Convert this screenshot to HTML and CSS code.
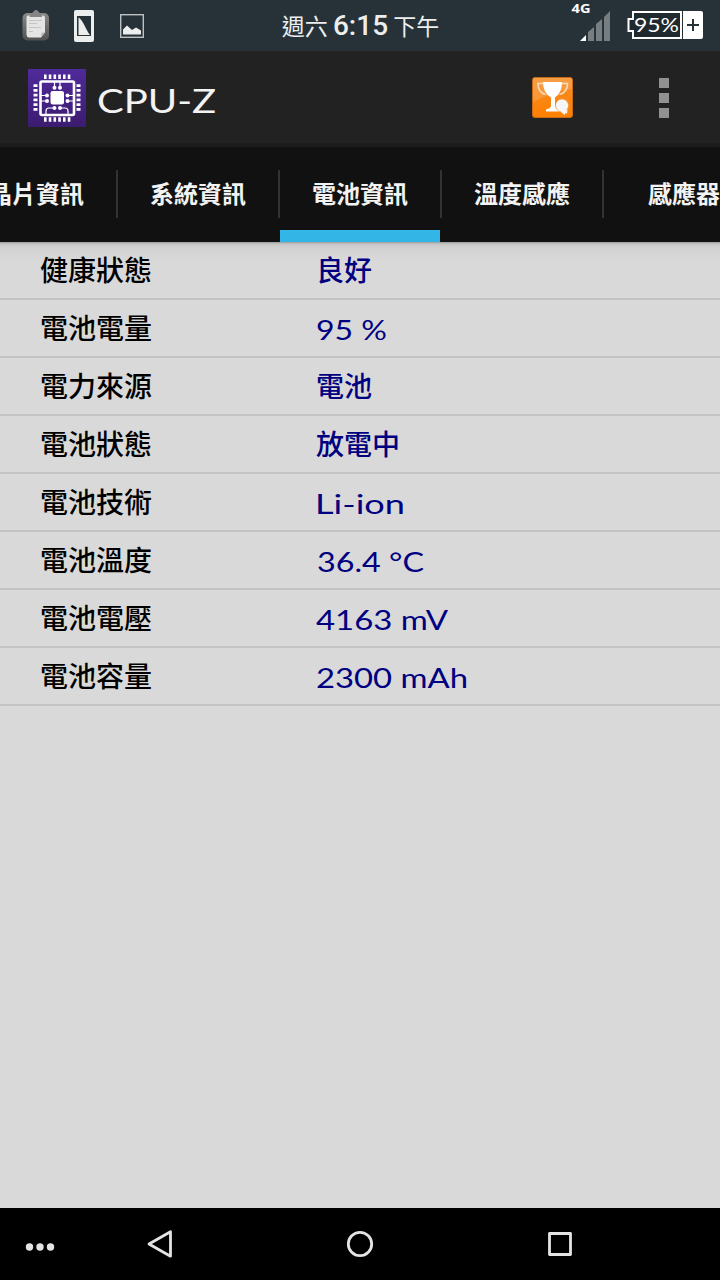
FILE: index.html
```html
<!DOCTYPE html>
<html lang="zh-Hant">
<head>
    <meta charset="utf-8">
    <title>CPU-Z</title>
    <link rel="stylesheet" href="styles.css">
</head>
<body>
    <!-- Status bar -->
    <div class="status-bar">
        <div class="status-icons">
            <svg width="28" height="34" viewBox="0 0 28 34">
                <defs>
                    <linearGradient id="clip" x1="0" y1="0" x2="0" y2="1">
                        <stop offset="0" stop-color="#8a8a8a"/>
                        <stop offset="1" stop-color="#515151"/>
                    </linearGradient>
                </defs>
                <rect x="0.5" y="4" width="26.5" height="27.5" rx="5" fill="url(#clip)"/>
                <path d="M6 6.500h15q2 0 2 2v15l-4 5H7q-2.500-.3-2.500-3v-17q0-2 1.500-2z" fill="#e4e4e4"/>
                <path d="M7 11.500h13M7 14.500h8M7 18.500h12M7 22.500h4" stroke="#c4c4c4" fill="none"/>
                <path d="M19 28l.5-4 3.500-1z" fill="#b5b5b5"/>
                <path d="M7.500 8c0-3 2-4 3.500-4.500 1-3.500 5-3.500 6 0 1.500.5 3 1.500 3 4.500z" fill="#858585"/>
            </svg>
            <svg width="20" height="32" viewBox="0 0 20 32">
                <path fill-rule="evenodd" d="M2 0h16q2 0 2 2v28q0 2-2 2H2q-2 0-2-2V2q0-2 2-2zM3 6v20h14V6z" fill="#eceeee"/>
                <path d="M4.500 7.500v17.500h11.500C12 20 9 10 4.500 7.500z" fill="#eceeee"/>
            </svg>
            <svg class="gallery" width="24" height="24" viewBox="0 0 24 24">
                <rect x="0.700" y="0.700" width="22.600" height="22.600" fill="none" stroke="#bcc1c3" stroke-width="1.400"/>
                <path d="M3 20.500v-5l4-4 5 4.500 4-2.500 5 3v4z" fill="#eceeee"/>
            </svg>
        </div>
        <div class="clock">週六 <b>6:15</b> 下午</div>
        <div class="status-right">
            <svg width="40" height="42" viewBox="0 0 40 42">
                <text class="network" x="1.500" y="13" textLength="19" lengthAdjust="spacingAndGlyphs">4G</text>
                <path d="M10 41l6-6v6z" fill="#fff"/>
                <path d="M18 41v-9l6-5v14zM26 41V24l6-5v22zM34 41V17l6-6v30z" fill="#767e81"/>
            </svg>
            <svg width="76" height="28" viewBox="0 0 76 28">
                <path d="M6 1h48v26H6v-7H1.500V8H6z" fill="#202a2e" stroke="#fff" stroke-width="2"/>
                <text class="battery" x="7" y="20.500" textLength="45" lengthAdjust="spacingAndGlyphs">95%</text>
                <path d="M56 0h18q2 0 2 2v24q0 2-2 2H56z" fill="#fff"/>
                <path d="M66 8v12M60 14h12" stroke="#263238" stroke-width="2"/>
            </svg>
        </div>
    </div>

    <!-- App bar -->
    <div class="app-bar">
        <svg class="app-icon" width="58" height="58" viewBox="0 0 58 58">
            <defs>
                <linearGradient id="chip" x1="0" y1="0" x2="0" y2="1">
                    <stop offset="0" stop-color="#4f2a9a"/>
                    <stop offset="1" stop-color="#3c1c70"/>
                </linearGradient>
            </defs>
            <rect width="58" height="58" fill="url(#chip)"/>
            <rect x="12.500" y="12.500" width="33.500" height="33.500" rx="1.500" fill="none" stroke="#fff" stroke-width="2.600"/>
            <g stroke="#fff" stroke-dasharray="2.600 2.150">
                <path d="M16 7.700h27M16 50.500h27" stroke-width="4.400"/>
                <path d="M7.500 15.300v27M50.500 15.300v27" stroke-width="4"/>
            </g>
            <rect x="22.500" y="22" width="13.500" height="13.500" rx="2.200" fill="#fff"/>
            <path d="M26.500 13v6M32 13v6M13 26.500h6M13 32h6M45 26.500h-6M45 32h-6M27 39h-6q-3 0-3 3v4M32 39h5q3 0 3 3v4" fill="none" stroke="#fff" stroke-width="1.200"/>
            <g fill="#fff">
                <circle cx="26.500" cy="18.800" r="2"/>
                <circle cx="32" cy="18.800" r="2"/>
                <circle cx="19" cy="26.500" r="2"/>
                <circle cx="19" cy="32" r="2"/>
                <circle cx="39.500" cy="26.500" r="2"/>
                <circle cx="39.500" cy="32" r="2"/>
                <circle cx="26.500" cy="39" r="2"/>
                <circle cx="32" cy="39" r="2"/>
            </g>
        </svg>
        <svg class="app-title" width="124" height="48" viewBox="0 0 124 48">
            <text x="1" y="39" textLength="119" lengthAdjust="spacingAndGlyphs">CPU-Z</text>
        </svg>
        <svg class="trophy" width="41" height="41" viewBox="0 0 41 41">
            <defs>
                <linearGradient id="orange" x1="0" y1="0" x2="0" y2="1">
                    <stop offset="0" stop-color="#f48d26"/>
                    <stop offset="1" stop-color="#ff8000"/>
                </linearGradient>
            </defs>
            <rect x="0.500" y="0.500" width="40" height="40" rx="2.500" fill="url(#orange)" stroke="#c66b19"/>
            <path d="M1 1h39v11Q22 14 1 25z" fill="#fff" opacity="0.150"/>
            <path d="M12 6.500H6q0 9 7.500 11M29 6.500h6.500q0 9-8 11" fill="none" stroke="#fbdcc0" stroke-width="1.500"/>
            <path d="M11 5h19q0 11-7 15.500v9q1 2 4 3v2H14v-2q4-1 5-3v-9Q11 16 11 5z" fill="#fff"/>
            <circle cx="30" cy="28.500" r="6.500" fill="#f6f6f6" stroke="#f49a45" stroke-width="0.700"/>
            <path d="M28.500 34.500l7-2-.5 4-1.500-.5-1 2z" fill="#f6f6f6"/>
        </svg>
        <div class="overflow"><i></i><i></i><i></i></div>
    </div>

    <!-- Tabs -->
    <div class="tabs">
        <div class="tab">晶片資訊</div>
        <div class="tab">系統資訊</div>
        <div class="tab active">電池資訊</div>
        <div class="tab">溫度感應</div>
        <div class="tab">感應器</div>
    </div>

    <!-- Battery details -->
    <div class="content">
        <div class="row"><span class="label">健康狀態</span><span class="value">良好</span></div>
        <div class="row"><span class="label">電池電量</span><svg class="reading" width="200" height="56"><text x="0" y="40" textLength="71" lengthAdjust="spacingAndGlyphs">95 %</text></svg></div>
        <div class="row"><span class="label">電力來源</span><span class="value">電池</span></div>
        <div class="row"><span class="label">電池狀態</span><span class="value">放電中</span></div>
        <div class="row"><span class="label">電池技術</span><svg class="reading" width="200" height="56"><text x="-1" y="40" textLength="90" lengthAdjust="spacingAndGlyphs">Li-ion</text></svg></div>
        <div class="row"><span class="label">電池溫度</span><svg class="reading" width="200" height="56"><text x="1" y="40" textLength="107" lengthAdjust="spacingAndGlyphs">36.4 °C</text></svg></div>
        <div class="row"><span class="label">電池電壓</span><svg class="reading" width="200" height="56"><text x="0" y="40" textLength="132" lengthAdjust="spacingAndGlyphs">4163 mV</text></svg></div>
        <div class="row"><span class="label">電池容量</span><svg class="reading" width="200" height="56"><text x="0" y="40" textLength="152" lengthAdjust="spacingAndGlyphs">2300 mAh</text></svg></div>
    </div>

    <!-- Navigation bar -->
    <div class="nav-bar">
        <svg width="720" height="72" viewBox="0 0 720 72">
            <g fill="#e4e4e4">
                <circle cx="29.500" cy="39" r="3.700"/>
                <circle cx="40" cy="39" r="3.700"/>
                <circle cx="50.500" cy="39" r="3.700"/>
            </g>
            <g fill="none" stroke="#e4e4e4" stroke-width="2.800" stroke-linejoin="round">
                <path d="M170.500 23.800v24.400L149 36z"/>
                <circle cx="360" cy="36" r="11.700"/>
                <rect x="549.500" y="25.500" width="21" height="21"/>
            </g>
        </svg>
    </div>
</body>
</html>
```
FILE: styles.css
```css
body {
    margin: 0;
    width: 720px;
    height: 1280px;
    display: flex;
    flex-direction: column;
    overflow: hidden;
    background-color: #d9d9d9;
    font-family: "Noto Sans CJK TC", sans-serif;
}
svg {
    display: block;
    flex: none;
    overflow: visible;
}
.status-bar {
    height: 51px;
    flex: none;
    display: grid;
    grid-template-columns: 260px 201px 259px;
    background-color: #273238;
    color: #eceeee;
}
.status-icons {
    display: flex;
    align-items: center;
    gap: 24px;
    padding-left: 22px;
}
.gallery {
    margin-left: 2px;
}
.clock {
    font-size: 23px;
    line-height: 50px;
    text-align: center;
    white-space: nowrap;
}
.clock b {
    font: 500 28px/50px Roboto, sans-serif;
}
.status-right {
    display: flex;
    justify-content: flex-end;
    padding-right: 17px;
    gap: 17px;
}
.status-right svg:last-child {
    margin-top: 11px;
}
.network {
    font: bold 13px "Open Sans", sans-serif;
    fill: #fff;
}
.battery {
    font: 19px Lato, sans-serif;
    fill: #fff;
}
.app-bar {
    height: 96px;
    flex: none;
    box-sizing: border-box;
    display: flex;
    align-items: center;
    padding-top: 1px;
    background-color: #222;
    border-bottom: 4px solid #1c1c1c;
}
.app-icon {
    margin-left: 28px;
}
.app-title {
    margin-left: 10px;
}
.app-title text {
    font: 33px Lato, sans-serif;
    fill: #f3f3f3;
}
.trophy {
    margin-left: 312px;
}
.overflow {
    display: grid;
    gap: 5px;
    margin-left: 86px;
    padding-top: 1px;
}
.overflow i {
    width: 10px;
    height: 10px;
    background-color: #919191;
}
.tabs {
    height: 95px;
    width: 764px;
    flex: none;
    display: flex;
    margin-left: -44px;
    background-color: #111;
}
.tab {
    width: 160px;
    flex: none;
    box-sizing: border-box;
    color: #f3f3f3;
    font-size: 24px;
    font-weight: bold;
    line-height: 91px;
    text-align: center;
}
/* divider between tabs */
.tab + .tab {
    width: 162px;
    border-left: 2px solid #333;
    border-image: linear-gradient(#111 23px, #333 23px, #333 71px, #111 71px) 0 0 0 2;
}
.active {
    background: linear-gradient(#33b5e5, #33b5e5) bottom / 100% 12px no-repeat;
    background-origin: padding-box;
    background-clip: padding-box;
}
.content {
    flex: 1;
    background: linear-gradient(#9b9b9b, #c6c6c6 2px, #d2d2d2 6px, #d9d9d9 20px);
}
.row {
    height: 56px;
    display: grid;
    grid-template-columns: 276px 1fr;
    padding-left: 40px;
    border-bottom: 2px solid #c3c3c3;
    font-size: 28px;
    font-weight: 500;
    line-height: 54px;
    color: #000;
}
.value {
    color: #000080;
}
.reading text {
    font: 26px Lato, sans-serif;
    fill: #000080;
}
.nav-bar {
    height: 72px;
    flex: none;
    background-color: #000;
}
```
